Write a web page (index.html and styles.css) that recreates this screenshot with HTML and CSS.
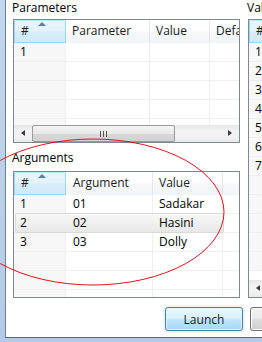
FILE: index.html
```html
<!DOCTYPE html>
<html lang="en">
<head>
  <meta charset="UTF-8">
  <title>Launch Report</title>
  <link rel="stylesheet" href="styles.css">
</head>
<body>
  <div class="window">
    <div class="client">
      <div class="panes">
        <!-- Left side: parameters and arguments -->
        <div class="pane">
          <div class="group-label">Parameters</div>
          <div class="grid params">
            <div class="grid-head">
              <div class="hcell sorted c-num">#<span class="sort-arrow"></span></div>
              <div class="hcell c-param">Parameter</div>
              <div class="hcell c-pval">Value</div>
              <div class="hcell c-def">Default</div>
            </div>
            <div class="grid-body">
              <div class="row"><div class="cell c-num">1</div><div class="cell c-param"></div><div class="cell c-pval"></div><div class="cell c-def"></div></div>
              <div class="row"><div class="cell c-num"></div><div class="cell c-param"></div><div class="cell c-pval"></div><div class="cell c-def"></div></div>
              <div class="row"><div class="cell c-num"></div><div class="cell c-param"></div><div class="cell c-pval"></div><div class="cell c-def"></div></div>
              <div class="row"><div class="cell c-num"></div><div class="cell c-param"></div><div class="cell c-pval"></div><div class="cell c-def"></div></div>
              <div class="row"><div class="cell c-num"></div><div class="cell c-param"></div><div class="cell c-pval"></div><div class="cell c-def"></div></div>
            </div>
            <div class="hscroll">
              <span class="arrow left"></span>
              <div class="track"><div class="thumb"><span class="grip"></span></div></div>
              <span class="arrow right"></span>
            </div>
          </div>

          <div class="group-label second">Arguments</div>
          <div class="grid args">
            <div class="grid-head">
              <div class="hcell sorted c-num">#<span class="sort-arrow"></span></div>
              <div class="hcell c-arg">Argument</div>
              <div class="hcell c-aval">Value</div>
              <div class="hcell c-fill"></div>
            </div>
            <div class="grid-body">
              <div class="row"><div class="cell c-num">1</div><div class="cell c-arg">01</div><div class="cell c-aval">Sadakar</div><div class="cell c-fill"></div></div>
              <div class="row selected"><div class="cell c-num">2</div><div class="cell c-arg">02</div><div class="cell c-aval">Hasini</div><div class="cell c-fill"></div></div>
              <div class="row"><div class="cell c-num">3</div><div class="cell c-arg">03</div><div class="cell c-aval">Dolly</div><div class="cell c-fill"></div></div>
              <div class="row"><div class="cell c-num"></div><div class="cell c-arg"></div><div class="cell c-aval"></div><div class="cell c-fill"></div></div>
              <div class="row"><div class="cell c-num"></div><div class="cell c-arg"></div><div class="cell c-aval"></div><div class="cell c-fill"></div></div>
              <div class="row"><div class="cell c-num"></div><div class="cell c-arg"></div><div class="cell c-aval"></div><div class="cell c-fill"></div></div>
            </div>
          </div>
        </div>

        <!-- Right side: values list -->
        <div class="pane">
          <div class="group-label">Values</div>
          <div class="grid values">
            <div class="grid-head">
              <div class="hcell sorted c-vnum">#</div>
              <div class="hcell c-vname">Name</div>
            </div>
            <div class="grid-body">
              <div class="row"><div class="cell c-vnum">1</div><div class="cell c-vname"></div></div>
              <div class="row"><div class="cell c-vnum">2</div><div class="cell c-vname"></div></div>
              <div class="row"><div class="cell c-vnum">3</div><div class="cell c-vname"></div></div>
              <div class="row"><div class="cell c-vnum">4</div><div class="cell c-vname"></div></div>
              <div class="row"><div class="cell c-vnum">5</div><div class="cell c-vname"></div></div>
              <div class="row"><div class="cell c-vnum">6</div><div class="cell c-vname"></div></div>
              <div class="row"><div class="cell c-vnum">7</div><div class="cell c-vname"></div></div>
              <div class="row"><div class="cell c-vnum"></div><div class="cell c-vname"></div></div>
              <div class="row"><div class="cell c-vnum"></div><div class="cell c-vname"></div></div>
              <div class="row"><div class="cell c-vnum"></div><div class="cell c-vname"></div></div>
              <div class="row"><div class="cell c-vnum"></div><div class="cell c-vname"></div></div>
              <div class="row"><div class="cell c-vnum"></div><div class="cell c-vname"></div></div>
            </div>
            <div class="hscroll">
              <span class="arrow left"></span>
              <div class="track"></div>
            </div>
          </div>
        </div>
      </div>

      <div class="buttons">
        <button class="btn default">Launch</button>
        <button class="btn">Cancel</button>
      </div>
    </div>
  </div>

  <!-- hand-drawn annotation over the arguments table -->
  <svg class="annotation" width="262" height="342" viewBox="0 0 262 342">
    <ellipse cx="93" cy="212" rx="131" ry="73" fill="none" stroke="#e4121c" stroke-width="1"/>
  </svg>
</body>
</html>
```

FILE: styles.css
```css
/* Window */
html, body {
  margin: 0;
  padding: 0;
}

body {
  width: 262px;
  height: 342px;
  overflow: hidden;
  position: relative;
  background: #bcd3ec;
  font-family: 'Segoe UI', 'Open Sans', sans-serif;
  font-size: 12px;
  color: #000;
}

.window {
  height: 342px;
  box-sizing: border-box;
  padding-left: 5px;
  padding-bottom: 4px;
  background: linear-gradient(to bottom, #c2d7ee, #b3cbe6);
}

.client {
  height: 338px;
  box-sizing: border-box;
  background: #fff;
  border-left: 1px solid #6e7f93;
  border-bottom: 1px solid #5b6470;
  overflow: hidden;
}

.panes {
  display: flex;
  gap: 8px;
  padding-left: 7px;
}

.pane {
  flex: 0 0 227px;
  width: 227px;
}

.group-label {
  height: 16px;
  line-height: 16px;
  margin: 0 0 3px -1px;
  color: #000;
  white-space: nowrap;
}

.group-label.second {
  margin-top: 7px;
  margin-bottom: 5px;
}

/* Grid (list view) */
.grid {
  border: 1px solid #828790;
  background: #fff;
  overflow: hidden;
  display: flex;
  flex-direction: column;
}

.params { height: 124px; box-sizing: border-box; }
.args { height: 127px; box-sizing: border-box; }
.values { height: 279px; box-sizing: border-box; }

.grid-head {
  display: flex;
  height: 23px;
  flex: 0 0 23px;
}

.hcell {
  position: relative;
  box-sizing: border-box;
  height: 23px;
  line-height: 22px;
  padding-left: 6px;
  white-space: nowrap;
  overflow: hidden;
  color: #1b1b1b;
  background: linear-gradient(to bottom, #fff 0%, #fff 45%, #f6f7f8 55%, #f3f4f6 100%);
  border-right: 1px solid #e3e6ea;
}

.hcell.sorted {
  background: linear-gradient(to bottom, #e9f5fc 0%, #e3f2fb 45%, #d7ecf9 55%, #d2e9f8 100%);
  border: 1px solid #96d9f9;
  border-top-color: #bfe5f9;
  line-height: 20px;
  padding-left: 6px;
}

.sort-arrow {
  position: absolute;
  top: 1px;
  left: 23px;
  width: 0;
  height: 0;
  border-left: 4px solid transparent;
  border-right: 4px solid transparent;
  border-bottom: 4px solid #5a7fa3;
}

.grid-body {
  flex: 1;
  overflow: hidden;
}

.row {
  display: flex;
  height: 18px;
  border-bottom: 1px solid #efefef;
}

.cell {
  box-sizing: border-box;
  height: 18px;
  line-height: 18px;
  padding-left: 6px;
  white-space: nowrap;
  border-right: 1px solid #efefef;
}

.cell.c-num, .cell.c-vnum {
  background: #f7f7f7;
}

.row.selected {
  position: relative;
}

.row.selected::before {
  content: "";
  position: absolute;
  left: 1px;
  top: -1px;
  width: 207px;
  height: 18px;
  border: 1px solid #d9d9d9;
  border-radius: 2px;
  background: linear-gradient(to bottom, #f8f8f8, #e8e8e8);
}

.row.selected .cell {
  position: relative;
  background: transparent;
  border-right-color: transparent;
}

/* column widths */
.c-num { flex: 0 0 52px; }
.c-param { flex: 0 0 84px; }
.c-pval { flex: 0 0 60px; }
.c-def { flex: 0 0 60px; }
.c-arg { flex: 0 0 87px; }
.c-aval { flex: 0 0 70px; }
.c-fill { flex: 0 0 40px; }
.c-vnum { flex: 0 0 40px; }
.c-vname { flex: 0 0 120px; }

.hcell.c-arg, .cell.c-arg { padding-left: 7px; }

/* Horizontal scrollbar */
.hscroll {
  flex: 0 0 17px;
  height: 17px;
  display: flex;
  align-items: center;
  background: linear-gradient(to bottom, #e6e6e6, #f2f2f2 30%, #f2f2f2 70%, #e9e9e9);
}

.arrow {
  flex: 0 0 17px;
  height: 17px;
  position: relative;
}

.arrow::after {
  content: "";
  position: absolute;
  top: 5px;
  width: 0;
  height: 0;
  border-top: 3px solid transparent;
  border-bottom: 3px solid transparent;
}

.arrow.left::after {
  left: 7px;
  border-right: 4px solid #3b3b3b;
}

.arrow.right::after {
  left: 6px;
  border-left: 4px solid #3b3b3b;
}

.track {
  flex: 1;
  height: 17px;
  position: relative;
}

.thumb {
  position: absolute;
  top: 0;
  left: 1px;
  width: 141px;
  height: 15px;
  border: 1px solid #9a9a9a;
  border-radius: 2px;
  background: linear-gradient(to bottom, #f4f4f4, #e8e8e8 50%, #d8d8d8 51%, #d2d2d2);
  display: flex;
  justify-content: center;
  align-items: center;
}

.grip {
  width: 7px;
  height: 6px;
  background: repeating-linear-gradient(to right, #555 0, #555 1px, transparent 1px, transparent 3px);
}

/* Buttons */
.buttons {
  display: flex;
  gap: 7px;
  margin-top: 9px;
  padding-left: 159px;
}

.btn {
  flex: 0 0 auto;
  width: 78px;
  height: 24px;
  padding: 0;
  font-family: inherit;
  font-size: 12px;
  color: #1b1b1b;
  border: 1px solid #707070;
  border-radius: 3px;
  background: linear-gradient(to bottom, #f2f2f2, #ebebeb 50%, #dddddd 51%, #cfcfcf);
  box-shadow: inset 0 0 0 1px #fcfcfc;
}

.btn.default {
  border-color: #3c7fb1;
  background: linear-gradient(to bottom, #eaf6fd, #d9f0fc 50%, #bee6fd 51%, #a7d9f5);
  box-shadow: inset 0 0 0 1px #e2f3fc, 0 0 0 2px #f3f3f3;
}

/* Annotation */
.annotation {
  position: absolute;
  left: 0;
  top: 0;
  pointer-events: none;
}
```
